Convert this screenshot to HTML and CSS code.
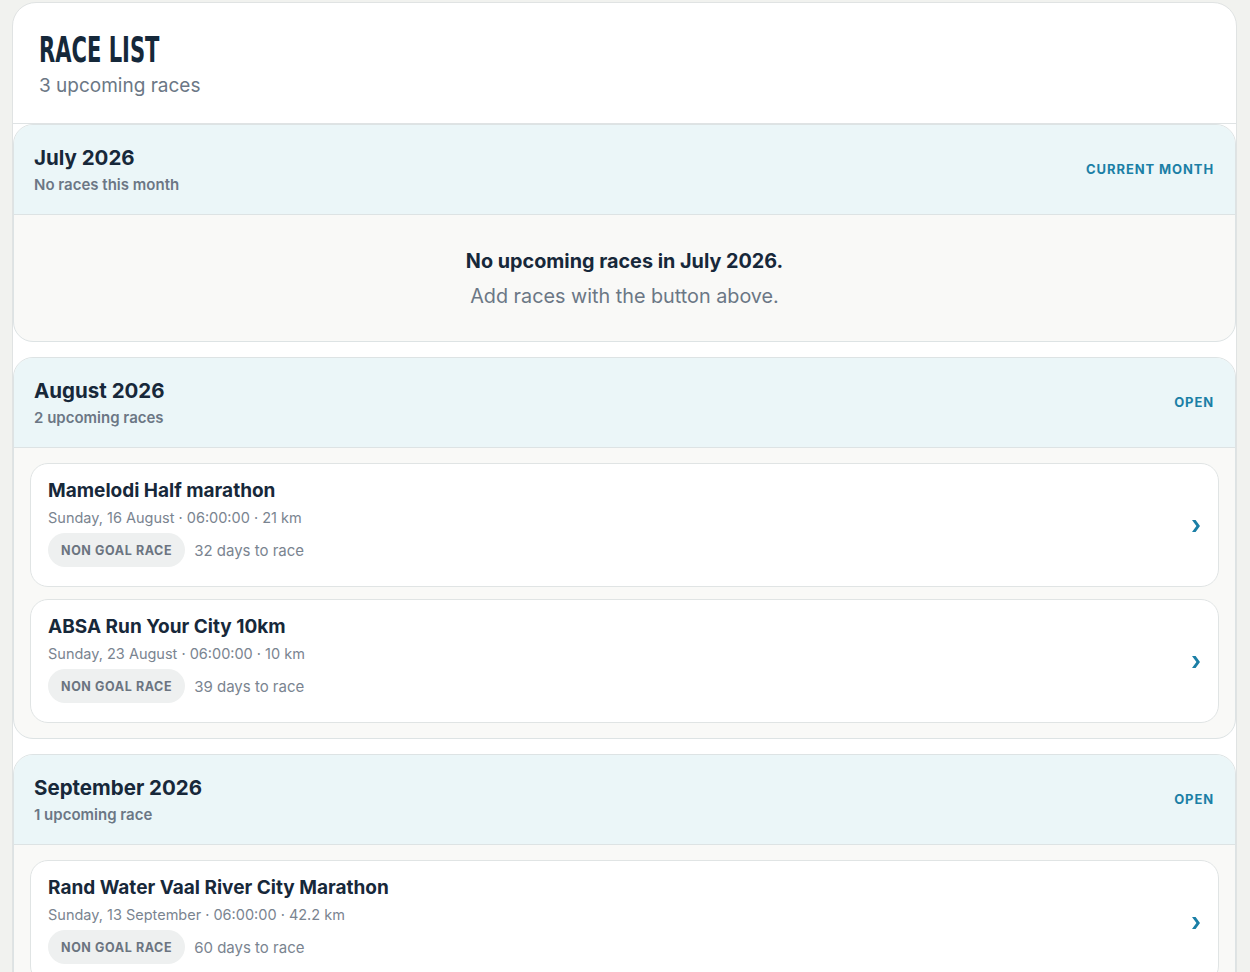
FILE: index.html
```html
<!DOCTYPE html>
<html lang="en">
<head>
<meta charset="utf-8">
<title>Race List</title>
<link rel="stylesheet" href="styles.css">
</head>
<body>
<div class="panel">
  <header class="panel-head">
    <h1 class="title"><span>RACE LIST</span></h1>
    <p class="subtitle">3 upcoming races</p>
  </header>
  <div class="months">
    <section class="month">
      <div class="month-head">
        <div>
          <h2 class="month-name">July 2026</h2>
          <p class="month-count">No races this month</p>
        </div>
        <span class="month-tag">CURRENT MONTH</span>
      </div>
      <div class="month-body empty">
        <p class="empty-title">No upcoming races in July 2026.</p>
        <p class="empty-sub">Add races with the button above.</p>
      </div>
    </section>

    <section class="month">
      <div class="month-head">
        <div>
          <h2 class="month-name">August 2026</h2>
          <p class="month-count">2 upcoming races</p>
        </div>
        <span class="month-tag">OPEN</span>
      </div>
      <div class="month-body">
        <div class="race">
          <div class="race-info">
            <h3 class="race-name">Mamelodi Half marathon</h3>
            <p class="race-meta">Sunday, 16 August · 06:00:00 · 21 km</p>
            <div class="race-foot"><span class="badge">NON GOAL RACE</span><span class="days">32 days to race</span></div>
          </div>
          <svg class="chev" width="8" height="12" viewBox="0 0 8 12"><path d="M0 0 H3.6 L8 6 L3.6 12 H0 L4.4 6 Z" fill="#1b7fa6"/></svg>
        </div>
        <div class="race">
          <div class="race-info">
            <h3 class="race-name">ABSA Run Your City 10km</h3>
            <p class="race-meta">Sunday, 23 August · 06:00:00 · 10 km</p>
            <div class="race-foot"><span class="badge">NON GOAL RACE</span><span class="days">39 days to race</span></div>
          </div>
          <svg class="chev" width="8" height="12" viewBox="0 0 8 12"><path d="M0 0 H3.6 L8 6 L3.6 12 H0 L4.4 6 Z" fill="#1b7fa6"/></svg>
        </div>
      </div>
    </section>

    <section class="month">
      <div class="month-head">
        <div>
          <h2 class="month-name">September 2026</h2>
          <p class="month-count">1 upcoming race</p>
        </div>
        <span class="month-tag">OPEN</span>
      </div>
      <div class="month-body">
        <div class="race">
          <div class="race-info">
            <h3 class="race-name">Rand Water Vaal River City Marathon</h3>
            <p class="race-meta">Sunday, 13 September · 06:00:00 · 42.2 km</p>
            <div class="race-foot"><span class="badge">NON GOAL RACE</span><span class="days">60 days to race</span></div>
          </div>
          <svg class="chev" width="8" height="12" viewBox="0 0 8 12"><path d="M0 0 H3.6 L8 6 L3.6 12 H0 L4.4 6 Z" fill="#1b7fa6"/></svg>
        </div>
      </div>
    </section>
  </div>
</div>
</body>
</html>
```

FILE: styles.css
```css
* { box-sizing: border-box; }
html, body { margin: 0; padding: 0; }
body {
  background: #f1f2ef;
  font-family: "Inter", "Lato", sans-serif;
  color: #17283a;
  padding: 2px 13px 0 12px;
  overflow: hidden;
  height: 972px;
}
p, h1, h2, h3 { margin: 0; }

.panel {
  background: #ffffff;
  border: 1px solid #e0e3e3;
  border-radius: 24px 24px 0 0;
  min-height: 1200px;
}

.panel-head {
  padding: 27px 26px 25px;
  border-bottom: 1px solid #dfe3e4;
}
.title {
  font-family: "Liberation Sans Narrow", "DejaVu Sans Condensed", sans-serif;
  font-weight: 700;
  font-size: 36px;
  line-height: 40px;
  color: #15283a;
  height: 40px;
}
.title span {
  display: inline-block;
  transform: scaleX(0.65);
  transform-origin: left center;
  letter-spacing: 0;
}
.subtitle {
  font-size: 19px;
  line-height: 26px;
  color: #6b7785;
  margin-top: 3px;
  margin-bottom: -1px;
}

.months {
  display: flex;
  flex-direction: column;
  gap: 15px;
}
.month {
  border: 1px solid #dde3e4;
  border-radius: 20px;
  overflow: hidden;
  background: #f9f9f7;
}
.month-head {
  background: #ebf6f8;
  border-bottom: 1px solid #dde3e4;
  height: 90px;
  padding: 0 21px 1px 20px;
  display: flex;
  align-items: center;
  justify-content: space-between;
}
.month-name {
  font-size: 20.5px;
  line-height: 28px;
  font-weight: 700;
  color: #17283a;
}
.month-count {
  font-size: 15px;
  line-height: 20px;
  font-weight: 600;
  color: #6b7785;
  margin-top: 3px;
}
.month-tag {
  font-size: 13px;
  font-weight: 700;
  letter-spacing: 0.9px;
  color: #1b7fa6;
}

.month-body {
  padding: 15px 16px 15px;
  display: flex;
  flex-direction: column;
  gap: 12px;
}
.month-body.empty {
  height: 126px;
  padding: 0;
  align-items: center;
  justify-content: center;
  gap: 11px;
}
.empty-title {
  font-size: 19.8px;
  line-height: 24px;
  font-weight: 700;
  color: #17283a;
}
.empty-sub {
  font-size: 19.8px;
  line-height: 24px;
  color: #6b7785;
}

.race {
  background: #ffffff;
  border: 1px solid #e0e4e4;
  border-radius: 18px;
  padding: 14px 18px 19px 17px;
  display: flex;
  align-items: center;
  justify-content: space-between;
}
.race-name {
  font-size: 19px;
  line-height: 26px;
  font-weight: 700;
  color: #17283a;
}
.race-meta {
  font-size: 14.5px;
  line-height: 20px;
  color: #7a8490;
  margin-top: 4px;
}
.race-foot {
  display: flex;
  align-items: center;
  gap: 9px;
  margin-top: 5px;
}
.badge {
  display: inline-flex;
  align-items: center;
  height: 34px;
  padding: 0 13px;
  border-radius: 17px;
  background: #eef0f0;
  font-size: 12.5px;
  font-weight: 700;
  letter-spacing: 0.6px;
  color: #6b7480;
}
.days {
  font-size: 15px;
  color: #7a8490;
}
.chev { flex: none; margin-top: 7px; }
```
